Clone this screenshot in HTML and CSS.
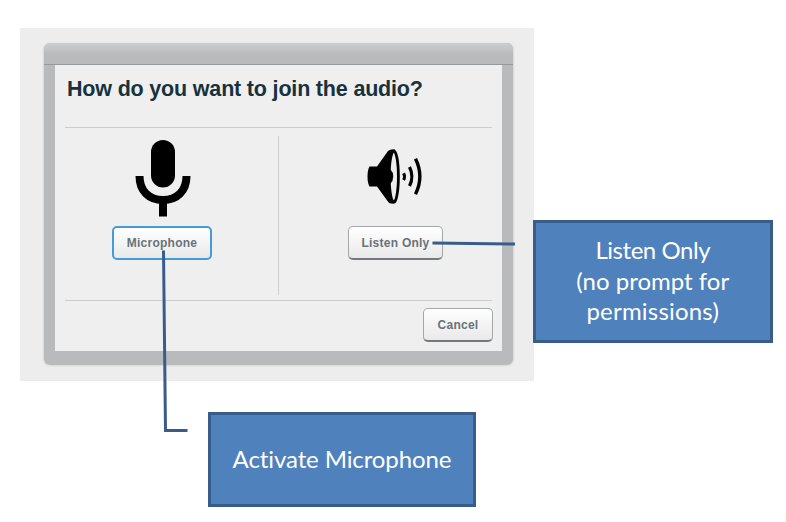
FILE: index.html
```html
<!DOCTYPE html>
<html lang="en">
<head>
<meta charset="utf-8">
<title>Join audio</title>
<link rel="stylesheet" href="styles.css">
</head>
<body>
<main class="backdrop">
  <section class="dialog">
    <div class="titlebar"></div>
    <div class="content">
      <h1><span>How do you want to join the audio?</span></h1>
      <div class="choices">
        <div class="choice mic">
          <svg width="56" height="77" viewBox="0 0 56 77">
            <rect x="16" y="0" width="24" height="47.500" rx="12"/>
            <path d="M4.500 36C4.500 51 14 60 28 60S51.500 51 51.500 36" fill="none" stroke="#000" stroke-width="8"/>
            <path d="M24 60h8v16.500h-8z"/>
          </svg>
          <button class="focused"><span>Microphone</span></button>
        </div>
        <div class="divider"></div>
        <div class="choice listen">
          <svg width="56" height="56" viewBox="0 0 56 56">
            <path d="M2.500 17.500H10L21 2Q22.500 .5 24.500 .5H28L27 54.500H24Q22 54.500 20.500 52L10 37.500H2.500Q.5 34 .5 27.500T2.500 17.500Z"/>
            <ellipse cx="26.800" cy="27.500" rx="4.600" ry="25.700" fill="#eee" stroke="#000" stroke-width="2.800"/>
            <path d="M20 20.500H23.500Q26.200 23 26.200 27.500T23.500 34.500H20Z"/>
            <g fill="none" stroke="#000">
              <path d="M36.600 24.300Q38.500 27.500 36.600 30.900" stroke-width="3"/>
              <path d="M42.500 18Q47.300 27.500 42.500 37" stroke-width="3.200"/>
              <path d="M48.500 9.800Q57.200 27.500 48.500 45.200" stroke-width="3.400"/>
            </g>
          </svg>
          <button><span>Listen Only</span></button>
        </div>
      </div>
      <footer><button class="cancel"><span>Cancel</span></button></footer>
    </div>
  </section>
</main>
<svg class="connectors" width="786" height="522" viewBox="0 0 786 522">
  <path d="M163.500 250.500L165.500 430.500H187.500M432.500 243L515 244"/>
</svg>
<aside class="callout listen-note">
  <span class="tight">Listen Only</span>
  <span>(no prompt for</span>
  <span class="loose">permissions)</span>
</aside>
<aside class="callout mic-note"><span class="single">Activate Microphone</span></aside>
</body>
</html>
```

FILE: styles.css
```css
* { box-sizing: border-box; }
body {
  margin: 0;
  width: 786px;
  height: 522px;
  overflow: hidden;
  background: #fff;
  font-family: "Liberation Sans", Arial, sans-serif;
}
.backdrop {
  width: 514px;
  height: 353px;
  margin: 28px 0 0 20px;
  padding: 15px 21px 17px 24px;
  background: #ededed;
  display: flow-root;
}
.dialog {
  height: 321px;
  padding: 0 11px 13px;
  background: #b9babc;
  border-radius: 6px;
  box-shadow: 0 1px 2px #aaa;
}
.titlebar {
  height: 22px;
  margin: 0 -11px;
  border-bottom: 1px solid #96999b;
  border-radius: 6px 6px 0 0;
  background: linear-gradient(#cdcecf, #b9babc 55%);
}
.content {
  height: 286px;
  padding: 0 10px;
  background: #efefef;
}
h1 {
  height: 63px;
  margin: 0;
  padding: 11px 0 0 2px;
  border-bottom: 1px solid #cdcdcd;
  color: #17323c;
  font-size: 21.500px;
  letter-spacing: -0.180px;
  line-height: 26px;
  white-space: nowrap;
}
.choices {
  height: 173px;
  display: flex;
  border-bottom: 1px solid #cdcdcd;
}
.choice {
  display: flex;
  flex-direction: column;
  align-items: flex-start;
}
.choice svg { display: block; }
.mic { width: 213px; padding: 12px 0 0 47px; }
.mic svg { margin-left: 22.500px; }
.mic button { width: 100px; margin-top: 9px; }
.divider { width: 1px; height: 159px; margin-top: 8px; background: #cdcdcd; }
.listen { padding: 21px 0 0 69px; }
.listen svg { margin-left: 19px; }
.listen button { width: 95px; margin-top: 21px; }
button {
  height: 34px;
  padding: 1px 0 0;
  border: 1.500px solid #a4a8aa;
  border-bottom: 2px solid #737a7e;
  border-radius: 5px;
  background: linear-gradient(#fff, #e9e9e9);
  color: #68737a;
  font: bold 12px "Liberation Sans", Arial, sans-serif;
  letter-spacing: 0.250px;
  white-space: nowrap;
}
button.focused { border: 2px solid #459bd8; padding: 0; }
footer { display: flex; justify-content: flex-end; margin-right: -1px; padding-top: 7px; }
.cancel { width: 70px; }
.connectors {
  position: absolute;
  inset: 0;
  fill: none;
  stroke: #385d8a;
  stroke-width: 3;
}
.callout {
  position: absolute;
  display: flex;
  flex-direction: column;
  align-items: center;
  justify-content: center;
  padding-bottom: 1px;
  border: 3px solid #385d8a;
  background: #4f81bd;
  color: #fff;
  font: 24px/30.500px Lato, "Open Sans", sans-serif;
  font-variant-ligatures: none;
  white-space: nowrap;
}
.tight { letter-spacing: -0.450px; }
.loose { letter-spacing: 0.200px; }
.single { letter-spacing: -0.100px; }
.listen-note { left: 533px; top: 220px; width: 239.500px; height: 123px; }
.mic-note { left: 208px; top: 412px; width: 268px; height: 95px; }
```
